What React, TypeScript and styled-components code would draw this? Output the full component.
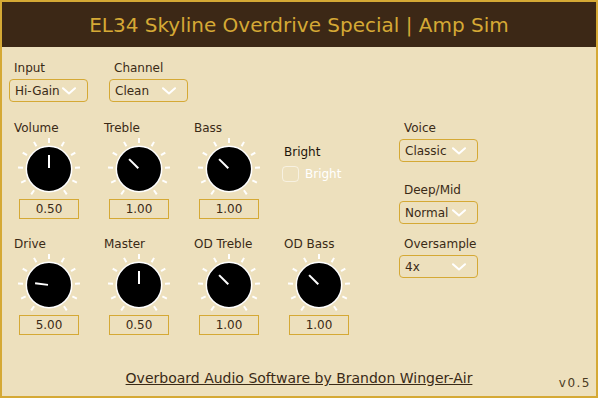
import React from "react";
import styled, { createGlobalStyle } from "styled-components";

const GOLD = "#d5a935";
const BG = "#ede0bd";
const BROWN = "#3c2816";
const TEXT = "#3a2a16";

const Global = createGlobalStyle`
  html, body { margin: 0; padding: 0; background: ${BG}; }
  body { font-family: "DejaVu Sans", Verdana, sans-serif; }
  * { box-sizing: border-box; }
`;

const Panel = styled.div`
  width: 598px;
  height: 398px;
  border: 2px solid ${GOLD};
  background: ${BG};
  display: flex;
  flex-direction: column;
  color: ${TEXT};
`;

const Header = styled.div`
  height: 45px;
  flex: none;
  background: ${BROWN};
  display: flex;
  align-items: center;
  justify-content: center;
`;

const Title = styled.h1`
  margin: 0;
  font-size: 20px;
  font-weight: normal;
  color: ${GOLD};
  line-height: 24px;
`;

const TopRow = styled.div`
  display: flex;
  gap: 21px;
  padding: 14px 0 0 7px;
`;

const Field = styled.div<{ $mt?: number }>`
  display: flex;
  flex-direction: column;
  gap: 4px;
  margin-top: ${(p) => p.$mt ?? 0}px;
`;

const Label = styled.div<{ $indent?: number; $dark?: boolean }>`
  font-size: 12px;
  line-height: 14px;
  padding-left: ${(p) => p.$indent ?? 0}px;
  color: ${(p) => (p.$dark ? "#1e150a" : TEXT)};
  white-space: nowrap;
`;

const Select = styled.div`
  width: 79px;
  height: 23px;
  border: 1px solid ${GOLD};
  border-radius: 4px;
  display: flex;
  align-items: center;
  justify-content: space-between;
  padding: 0 11px 0 5px;
  font-size: 12px;
  color: ${TEXT};
`;

const Main = styled.div`
  display: flex;
  padding: 19px 0 0 12px;
`;

const KnobGrid = styled.div`
  display: grid;
  grid-template-columns: repeat(4, 70px);
  grid-auto-rows: auto;
  column-gap: 20px;
  row-gap: 18px;
`;

const KnobCol = styled.div`
  display: flex;
  flex-direction: column;
  align-items: center;
`;

const KnobLabel = styled(Label)`
  align-self: stretch;
`;

const KnobSvg = styled.svg`
  display: block;
  margin-top: 3px;
`;

const ValueBox = styled.div`
  width: 60px;
  height: 20px;
  margin-top: 3px;
  border: 1px solid ${GOLD};
  display: flex;
  align-items: center;
  justify-content: center;
  font-size: 12px;
  color: ${TEXT};
`;

const BrightCol = styled.div`
  display: flex;
  flex-direction: column;
  padding-top: 24px;
  gap: 7px;
`;

const CheckRow = styled.label`
  display: flex;
  align-items: center;
  gap: 6px;
  margin-left: -2px;
  font-size: 12px;
  color: #ffffff;
`;

const CheckBox = styled.span`
  width: 17px;
  height: 16px;
  border: 1px solid rgba(255, 255, 255, 0.55);
  border-radius: 4px;
`;

const RightCol = styled.div`
  display: flex;
  flex-direction: column;
  margin-left: 45px;
  padding-left: 0;
`;

const Footer = styled.div`
  margin-top: auto;
  display: grid;
  grid-template-columns: 1fr auto 1fr;
  align-items: end;
  padding: 0 5px 6px 5px;
`;

const Credit = styled.a`
  grid-column: 2;
  font-size: 14px;
  line-height: 17px;
  color: ${TEXT};
  text-decoration: underline;
  margin-bottom: 3px;
`;

const Version = styled.div`
  grid-column: 3;
  justify-self: end;
  font-size: 12px;
  line-height: 14px;
  letter-spacing: 1.5px;
  color: #4a3a22;
`;

const Chevron = () => (
  <svg width="14" height="8" viewBox="0 0 14 8">
    <path d="M1 1.2 L7 6.5 L13 1.2" fill="none" stroke="#ffffff" strokeWidth="2" strokeLinecap="round" strokeLinejoin="round" />
  </svg>
);

const TICKS = [-145, -116, -87, -58, -29, 0, 29, 58, 87, 116, 145];

const Knob = ({ angle }: { angle: number }) => {
  const cx = 35;
  const cy = 31;
  const rad = (a: number) => ((a - 90) * Math.PI) / 180;
  return (
    <KnobSvg width="70" height="58" viewBox="0 0 70 58">
      {TICKS.map((t) => (
        <line
          key={t}
          x1={cx + 26 * Math.cos(rad(t))}
          y1={cy + 26 * Math.sin(rad(t))}
          x2={cx + 31 * Math.cos(rad(t))}
          y2={cy + 31 * Math.sin(rad(t))}
          stroke="#ffffff"
          strokeWidth="2"
        />
      ))}
      <circle cx={cx} cy={cy} r="22.7" fill="#000000" stroke="#ffffff" strokeWidth="1.5" />
      <line
        x1={cx + 1 * Math.cos(rad(angle))}
        y1={cy + 1 * Math.sin(rad(angle))}
        x2={cx + 14 * Math.cos(rad(angle))}
        y2={cy + 14 * Math.sin(rad(angle))}
        stroke="#ffffff"
        strokeWidth="2"
      />
    </KnobSvg>
  );
};

const KnobControl = ({ label, value, angle }: { label: string; value: string; angle: number }) => (
  <KnobCol>
    <KnobLabel>{label}</KnobLabel>
    <Knob angle={angle} />
    <ValueBox>{value}</ValueBox>
  </KnobCol>
);

const Dropdown = ({ label, value, mt }: { label: string; value: string; mt?: number }) => (
  <Field $mt={mt}>
    <Label $indent={5}>{label}</Label>
    <Select>
      <span>{value}</span>
      <Chevron />
    </Select>
  </Field>
);

export default function App() {
  return (
    <>
      <Global />
      <Panel>
        <Header>
          <Title>EL34 Skyline Overdrive Special | Amp Sim</Title>
        </Header>
        <TopRow>
          <Dropdown label="Input" value="Hi-Gain" />
          <Dropdown label="Channel" value="Clean" />
        </TopRow>
        <Main>
          <KnobGrid>
            <KnobControl label="Volume" value="0.50" angle={0} />
            <KnobControl label="Treble" value="1.00" angle={-45} />
            <KnobControl label="Bass" value="1.00" angle={-45} />
            <BrightCol>
              <Label $dark>Bright</Label>
              <CheckRow>
                <CheckBox />
                Bright
              </CheckRow>
            </BrightCol>
            <KnobControl label="Drive" value="5.00" angle={-83} />
            <KnobControl label="Master" value="0.50" angle={0} />
            <KnobControl label="OD Treble" value="1.00" angle={-45} />
            <KnobControl label="OD Bass" value="1.00" angle={-45} />
          </KnobGrid>
          <RightCol>
            <Dropdown label="Voice" value="Classic" />
            <Dropdown label="Deep/Mid" value="Normal" mt={21} />
            <Dropdown label="Oversample" value="4x" mt={13} />
          </RightCol>
        </Main>
        <Footer>
          <Credit>Overboard Audio Software by Brandon Winger-Air</Credit>
          <Version>v0.5</Version>
        </Footer>
      </Panel>
    </>
  );
}
